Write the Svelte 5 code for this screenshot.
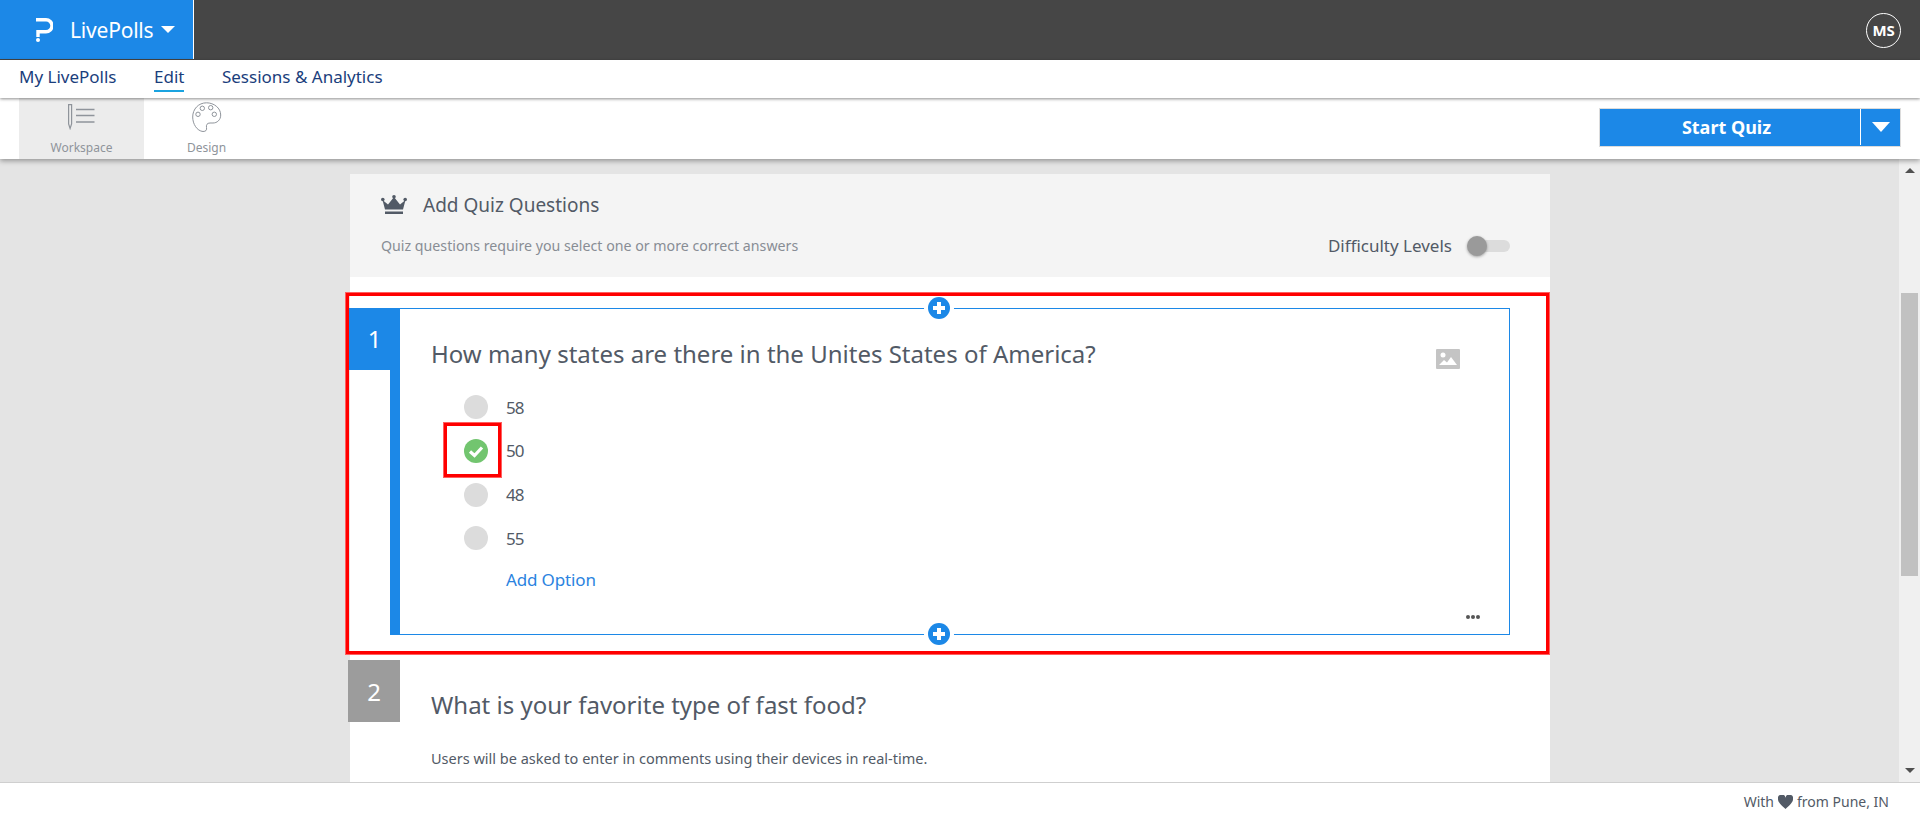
<script>
  const options = [
    { label: '58', correct: false },
    { label: '50', correct: true },
    { label: '48', correct: false },
    { label: '55', correct: false }
  ];
</script>

<div class="page">
  <header class="topbar">
    <div class="brand">
      <svg class="logo" viewBox="0 0 18 24" width="18" height="24" aria-hidden="true">
        <path d="M1 1.700H11a6 6 0 0 1 0 12H3V19" fill="none" stroke="#fff" stroke-width="3.400"/>
        <circle cx="3" cy="22" r="2" fill="#fff"/>
      </svg>
      <span class="brand-name">LivePolls</span>
      <span class="caret"></span>
    </div>
    <div class="avatar">MS</div>
  </header>

  <nav class="tabs">
    <a class="tab">My LivePolls</a>
    <a class="tab active">Edit</a>
    <a class="tab">Sessions &amp; Analytics</a>
  </nav>

  <div class="toolbar">
    <div class="tools">
      <div class="tool selected">
        <svg class="ws-icon" viewBox="0 0 28 26" width="28" height="26" aria-hidden="true" fill="none" stroke="#8f949b">
          <path d="M1.600 .6h3v19.400l-1.500 4.500l-1.500-4.500z" stroke-width="1.200"/>
          <path d="M9 5.500h18.500M9 11.500h18.500M9 18h18.500" stroke-width="1.500"/>
        </svg>
        <span>Workspace</span>
      </div>
      <div class="tool">
        <svg viewBox="0 0 30 30" width="30" height="30" aria-hidden="true" fill="none" stroke="#8f949b" stroke-width="1">
          <path d="M14.500 .8C22 .8 28.700 6 28.700 13C28.700 18 25 21 21 21L18 21C15 21 14 23 14.500 25.500C15 28 14 29.500 11 29.500C5 29 .7 22 .7 15C.7 7 6.500 .8 14.500 .8z"/>
          <circle cx="6" cy="12.300" r="2.200"/><circle cx="10.300" cy="6.300" r="2.200"/>
          <circle cx="18.700" cy="5.700" r="2.200"/><circle cx="22.300" cy="12.300" r="2.200"/>
        </svg>
        <span>Design</span>
      </div>
    </div>
    <div class="start">
      <button class="start-main">Start Quiz</button>
      <button class="start-more"><span class="caret big"></span></button>
    </div>
  </div>

  <main class="workspace">
    <div class="sheet">
      <section class="intro">
        <div class="intro-title">
          <svg viewBox="0 0 26 20" width="26" height="20" aria-hidden="true" fill="#525a66">
            <path d="M1.500 5L7 9.500L13 2L19 9.500L24.500 5L22 14.500H4z"/>
            <circle cx="1.800" cy="4.500" r="1.800"/><circle cx="13" cy="1.800" r="1.800"/><circle cx="24.200" cy="4.500" r="1.800"/>
            <rect x="4" y="16.500" width="18" height="2.500"/>
          </svg>
          <h2>Add Quiz Questions</h2>
        </div>
        <div class="intro-row">
          <p>Quiz questions require you select one or more correct answers</p>
          <div class="difficulty">
            <span>Difficulty Levels</span>
            <span class="switch"><span class="knob"></span></span>
          </div>
        </div>
      </section>

      <div class="question-wrap">
        <article class="question">
          <div class="number">1</div>
          <span class="plus top"></span>
          <div class="q-body">
            <h3>How many states are there in the Unites States of America?</h3>
            <svg class="image-icon" viewBox="0 0 24 20" width="24" height="20" aria-hidden="true">
              <rect width="24" height="20" rx="1" fill="#c4c4c4"/>
              <circle cx="7" cy="6" r="2.500" fill="#fff"/>
              <path d="M3 16l5-5 3 2.500 4-5.500 6 8z" fill="#fff"/>
            </svg>
            <ul class="options">
              {#each options as o}
                <li>
                  {#if o.correct}
                    <span class="radio ok">
                      <svg viewBox="0 0 24 24" width="24" height="24" aria-hidden="true">
                        <circle cx="12" cy="12" r="12" fill="#72c56f"/>
                        <path d="M6 12.500l4.500 4l7.500-8" fill="none" stroke="#fff" stroke-width="3.200"/>
                      </svg>
                    </span>
                  {:else}
                    <span class="radio"></span>
                  {/if}
                  <span class="opt-label">{o.label}</span>
                </li>
              {/each}
            </ul>
            <a class="add-option">Add Option</a>
            <div class="dots"><i></i><i></i><i></i></div>
            <div class="callout"></div>
          </div>
          <span class="plus bottom"></span>
        </article>
      </div>

      <article class="question-two">
        <div class="number grey">2</div>
        <div class="two-body">
          <h3>What is your favorite type of fast food?</h3>
          <p>Users will be asked to enter in comments using their devices in real-time.</p>
        </div>
      </article>
    </div>
    <div class="scrollbar">
      <span class="arrow up"></span>
      <div class="thumb"></div>
      <span class="arrow down"></span>
    </div>
  </main>

  <footer class="footer">
    <span>With</span>
    <svg viewBox="0 0 24 22" width="15" height="14" aria-hidden="true"><path d="M12 22C5 15.500 0 11.500 0 6.500A6 6 0 0 1 12 4a6 6 0 0 1 12 2.500C24 11.500 19 15.500 12 22z" fill="#525a66"/></svg>
    <span>from Pune, IN</span>
  </footer>
</div>

<style>
  :global(body) {
    margin: 0;
    overflow: hidden;
    font-family: "Noto Sans", "Open Sans", sans-serif;
    color: #525a66;
  }
  .page {
    width: 1920px;
    height: 820px;
    display: flex;
    flex-direction: column;
    background: #e4e4e4;
  }
  .topbar {
    height: 60px;
    flex: none;
    background: #464646;
    display: flex;
    justify-content: space-between;
    align-items: center;
    padding-right: 19px;
    box-sizing: border-box;
  }
  .brand {
    width: 194px;
    height: 59px;
    align-self: flex-start;
    background: #1c88e7;
    border-right: 1px solid #fff;
    display: flex;
    align-items: center;
    padding-left: 35px;
    box-sizing: border-box;
    color: #fff;
  }
  .logo { margin-right: 17px; }
  .brand-name { font-size: 21px; letter-spacing: -0.2px; }
  .caret {
    margin-left: 8px;
    width: 0;
    height: 0;
    border-left: 7px solid transparent;
    border-right: 7px solid transparent;
    border-top: 7px solid #fff;
  }
  .caret.big {
    display: block;
    margin: 0;
    border-left-width: 9px;
    border-right-width: 9px;
    border-top-width: 10px;
  }
  .avatar {
    width: 33px;
    height: 33px;
    border: 1px solid #fff;
    border-radius: 50%;
    color: #fff;
    font-weight: 700;
    font-size: 15px;
    letter-spacing: -0.3px;
    display: flex;
    align-items: center;
    justify-content: center;
  }
  .tabs {
    height: 38px;
    flex: none;
    background: #fff;
    display: flex;
    gap: 37.500px;
    padding-left: 19px;
    box-shadow: 0 1px 3px rgba(0, 0, 0, 0.45);
    position: relative;
    z-index: 2;
    font-size: 17px;
    color: #1a3e7c;
  }
  .tab {
    display: block;
    height: 32px;
    line-height: 34px;
    box-sizing: border-box;
  }
  .tab.active { border-bottom: 2px solid #1aa3e0; }
  .toolbar {
    height: 61px;
    flex: none;
    background: #fff;
    display: flex;
    justify-content: space-between;
    padding: 0 19px;
    box-shadow: 0 2px 5px rgba(0, 0, 0, 0.35);
    position: relative;
    z-index: 1;
  }
  .tools { display: flex; }
  .tool {
    width: 125px;
    display: flex;
    flex-direction: column;
    align-items: center;
    font-size: 12px;
    color: #8f949b;
    padding: 4px 0 3px;
    box-sizing: border-box;
  }
  .tool span { margin-top: auto; }
  .tool.selected { background: #ececec; }
  .ws-icon { margin: 2px 2px 0 0; }
  .start {
    display: flex;
    align-self: flex-start;
    margin-top: 10px;
    height: 39px;
    border: 1px solid #dcdcdc;
    box-sizing: border-box;
    background: #1c88e7;
  }
  .start button {
    background: none;
    border: 0;
    color: #fff;
    font-family: inherit;
    padding: 0;
    height: 36px;
  }
  .start-main {
    width: 261px;
    font-size: 18px;
    font-weight: 700;
    border-right: 1px solid #fff !important;
    padding-right: 7px !important;
    box-sizing: border-box;
  }
  .start-more {
    width: 39px;
    display: flex;
    align-items: center;
    justify-content: center;
  }
  .workspace {
    flex: 1;
    min-height: 0;
    display: flex;
    justify-content: space-between;
    overflow: hidden;
  }
  .sheet {
    width: 1200px;
    margin-left: 350px;
    margin-top: 15px;
    background: #fff;
    box-sizing: border-box;
  }
  .intro {
    height: 103px;
    background: #f4f4f4;
    padding: 18px 40px 0 31px;
    box-sizing: border-box;
  }
  .intro-title { display: flex; align-items: center; gap: 16px; }
  .intro-title h2 {
    margin: 0;
    font-size: 19px;
    font-weight: 400;
    line-height: 26px;
  }
  .intro-row {
    display: flex;
    justify-content: space-between;
    align-items: center;
    margin-top: 16px;
  }
  .intro-row p { margin: 0; font-size: 14.200px; color: #888d94; }
  .difficulty { display: flex; align-items: center; gap: 16px; font-size: 17px; }
  .switch {
    width: 42px;
    height: 12px;
    background: #dcdcdc;
    border-radius: 6px;
    position: relative;
  }
  .knob {
    position: absolute;
    left: -1px;
    top: -4px;
    width: 20px;
    height: 20px;
    border-radius: 50%;
    background: #9a9a9a;
    box-shadow: 0 1px 3px rgba(0, 0, 0, 0.35);
  }
  .question-wrap {
    margin: 16px 1px 0 -4px;
    height: 361px;
    border: 3px solid #f00;
    outline: 1px solid #ff6060;
    box-sizing: border-box;
    padding: 12px 36px 0 0;
  }
  .question {
    position: relative;
    margin-left: 41px;
    height: 327px;
    border: 1px solid #1c88e7;
    border-left: 10px solid #1c88e7;
    box-sizing: border-box;
  }
  .number {
    position: absolute;
    left: -51px;
    top: -1px;
    width: 51px;
    height: 62px;
    background: #1c88e7;
    color: #fff;
    font-size: 24px;
    display: flex;
    align-items: center;
    justify-content: center;
    padding-bottom: 2px;
    box-sizing: border-box;
  }
  .plus {
    position: absolute;
    left: 528px;
    width: 22px;
    height: 22px;
    border-radius: 50%;
    background: #1c88e7;
    box-shadow: -4px 0 0 #fff, 4px 0 0 #fff;
  }
  .plus.top { top: -12px; }
  .plus.bottom { bottom: -11px; }
  .plus::before, .plus::after {
    content: "";
    position: absolute;
    background: #fff;
  }
  .plus::before { left: 5px; top: 9px; width: 12px; height: 4px; }
  .plus::after { left: 9px; top: 5px; width: 4px; height: 12px; }
  .q-body {
    position: relative;
    height: 100%;
    padding: 29px 0 0 31px;
    box-sizing: border-box;
  }
  .q-body h3 {
    margin: 0;
    font-size: 24px;
    font-weight: 400;
    line-height: 32px;
  }
  .image-icon { position: absolute; right: 49px; top: 40px; }
  .options { list-style: none; margin: 15.500px 0 0; padding: 0 0 0 33px; }
  .options li {
    height: 43.670px;
    display: flex;
    align-items: center;
    gap: 18px;
    font-size: 17px;
    letter-spacing: -1px;
  }
  .radio {
    width: 24px;
    height: 24px;
    border-radius: 50%;
    background: #dcdcdc;
    display: block;
  }
  .radio.ok { background: none; }
  .radio svg { display: block; }
  .add-option {
    display: block;
    margin: 8px 0 0 75px;
    font-size: 17px;
    letter-spacing: -0.15px;
    line-height: 24px;
    color: #2b83e0;
  }
  .dots {
    position: absolute;
    right: 29px;
    bottom: 15px;
    display: flex;
    gap: 1px;
  }
  .dots i { width: 4px; height: 4px; border-radius: 50%; background: #555; }
  .callout {
    position: absolute;
    left: 44px;
    top: 114px;
    width: 57px;
    height: 54px;
    border: 3px solid #f00;
    outline: 1px solid #ff6060;
    box-sizing: border-box;
  }
  .question-two {
    position: relative;
    padding: 35px 0 0 81px;
  }
  .number.grey {
    left: -2px;
    top: 6px;
    width: 52px;
    height: 62px;
    background: #9c9c9c;
    padding-bottom: 0;
  }
  .two-body h3 {
    margin: 0;
    font-size: 24px;
    font-weight: 400;
    line-height: 32px;
  }
  .two-body p { margin: 27px 0 0; font-size: 14.500px; }
  .scrollbar {
    width: 21px;
    background: #f0f0f0;
    position: relative;
    display: flex;
    flex-direction: column;
    align-items: center;
    justify-content: space-between;
    padding: 9px 0;
    box-sizing: border-box;
  }
  .arrow { width: 0; height: 0; border-left: 5px solid transparent; border-right: 5px solid transparent; }
  .arrow.up { border-bottom: 5px solid #505050; }
  .arrow.down { border-top: 5px solid #505050; }
  .thumb {
    position: absolute;
    left: 2px;
    right: 2px;
    top: 134px;
    height: 283px;
    background: #c1c1c1;
  }
  .footer {
    height: 38px;
    flex: none;
    background: #fff;
    border-top: 1px solid #cfcfcf;
    box-sizing: border-box;
    display: flex;
    align-items: center;
    justify-content: flex-end;
    gap: 4px;
    padding-right: 31px;
    font-size: 14px;
    position: relative;
    z-index: 3;
  }
</style>
